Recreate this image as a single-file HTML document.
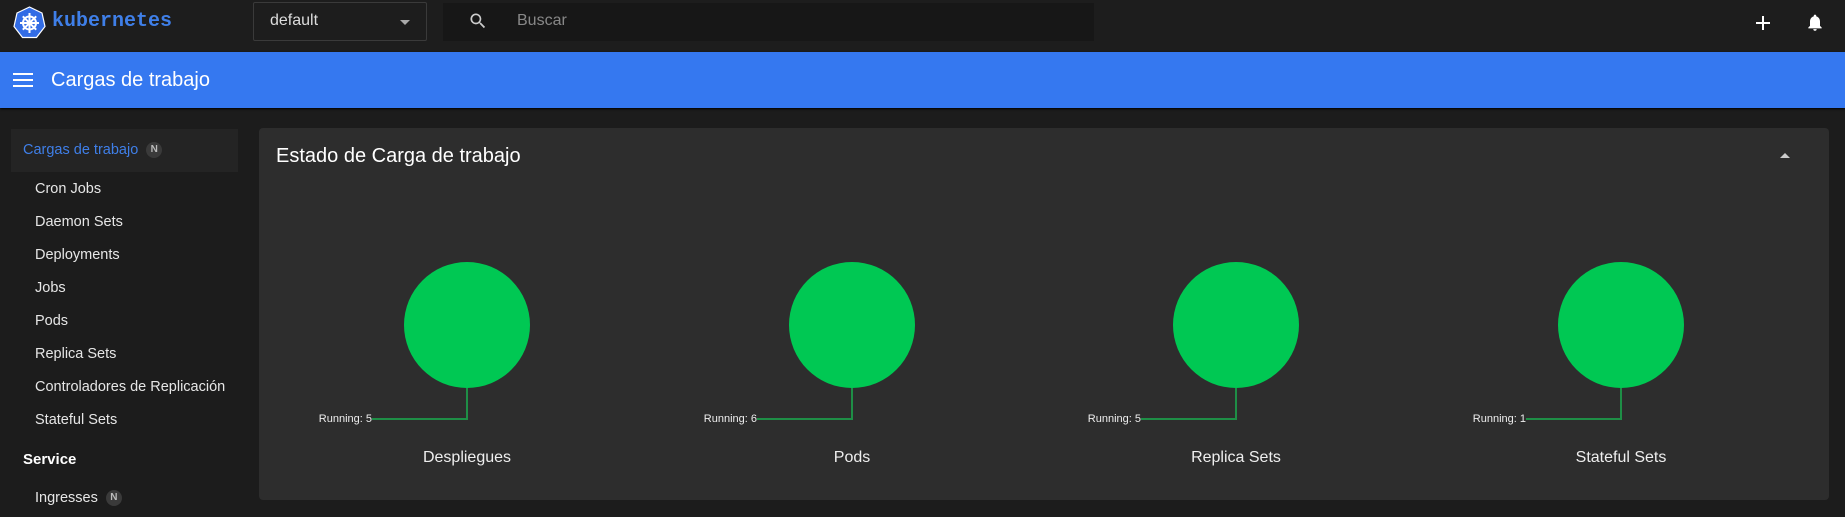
<!DOCTYPE html>
<html><head><meta charset="utf-8"><style>
*{margin:0;padding:0;box-sizing:border-box}
body{width:1845px;height:517px;overflow:hidden;background:#1c1c1c;font-family:"Liberation Sans",sans-serif;position:relative;color:#fff}
.a{position:absolute}
.top{left:0;top:0;width:1845px;height:52px;background:#1d1d1d}
.blue{left:0;top:52px;width:1845px;height:56px;background:#3578f0;box-shadow:0 1px 2px #000}
.side{font-size:14.5px;color:#e6e6e6;left:35px}
.card{left:259px;top:128px;width:1570px;height:372px;background:#2d2d2d;border-radius:4px}
.circ{width:126px;height:126px;border-radius:50%;background:#00c853;top:262px}
.run{font-size:11px;color:#eee;top:413px;width:100px;text-align:right}
.lbl{font-size:16px;color:#eee;top:449px;width:200px;text-align:center}
.badge{display:inline-block;width:16px;height:16px;border-radius:50%;background:#3a3a3a;color:#bbb;font-size:10px;text-align:center;line-height:16px;vertical-align:middle;margin-left:8px;font-weight:bold}
</style></head><body>
<div class="a top"></div>
<svg class="a" style="left:13px;top:6px" width="33" height="33" viewBox="0 0 33 33">
<polygon points="16.5,1 29,7 32,20.5 23.5,31.5 9.5,31.5 1,20.5 4,7" fill="#326ce5" stroke="#fff" stroke-width="1.2"/>
<g stroke="#fff" stroke-width="2" fill="none"><circle cx="16.5" cy="17" r="6.5"/><path d="M16.5 7v20M7 17h19M9.8 10.3l13.4 13.4M23.2 10.3L9.8 23.7"/></g><circle cx="16.5" cy="17" r="2" fill="#fff"/></svg>
<div class="a" style="left:52px;top:10px;font-family:'Liberation Mono',monospace;font-weight:bold;font-size:20px;color:#3f7fe8">kubernetes</div>
<div class="a" style="left:253px;top:2px;width:174px;height:39px;border:1px solid #3a3a3a;border-radius:2px"></div>
<div class="a" style="left:270px;top:12px;font-size:16px;color:#ddd">default</div>
<div class="a" style="left:400px;top:20px;border-left:5px solid transparent;border-right:5px solid transparent;border-top:5px solid #aaa"></div>
<div class="a" style="left:443px;top:3px;width:651px;height:38px;background:#171717"></div>
<svg class="a" style="left:468px;top:11px" width="20" height="20" viewBox="0 0 24 24"><path fill="#ccc" d="M15.5 14h-.8l-.3-.3A6.5 6.5 0 1 0 9.5 16a6.5 6.5 0 0 0 4.2-1.6l.3.3v.8l5 5 1.5-1.5-5-5zm-6 0A4.5 4.5 0 1 1 9.5 5a4.5 4.5 0 0 1 0 9z"/></svg>
<div class="a" style="left:517px;top:12px;font-size:16px;color:#888">Buscar</div>
<svg class="a" style="left:1754px;top:14px" width="18" height="18" viewBox="0 0 18 18"><path d="M9 2v14M2 9h14" stroke="#fff" stroke-width="2"/></svg>
<svg class="a" style="left:1805px;top:11px" width="20" height="23" viewBox="0 0 24 24"><path fill="#fff" d="M12 22a2 2 0 0 0 2-2h-4a2 2 0 0 0 2 2zm6-6v-5c0-3.1-1.6-5.6-4.5-6.3V4a1.5 1.5 0 0 0-3 0v.7C7.6 5.4 6 7.9 6 11v5l-2 2v1h16v-1l-2-2z"/></svg>
<div class="a blue"></div>
<svg class="a" style="left:13px;top:72px" width="20" height="16" viewBox="0 0 20 16"><path d="M0 2h20M0 8h20M0 14h20" stroke="#fff" stroke-width="2"/></svg>
<div class="a" style="left:51px;top:69px;font-size:20px;color:#fff">Cargas de trabajo</div>
<div class="a" style="left:11px;top:129px;width:227px;height:43px;background:#242424"></div>
<div class="a" style="left:23px;top:142px;font-size:14.5px;color:#3f7fe8">Cargas de trabajo<span class="badge">N</span></div>
<div class="a side" style="top:181px">Cron Jobs</div>
<div class="a side" style="top:214px">Daemon Sets</div>
<div class="a side" style="top:247px">Deployments</div>
<div class="a side" style="top:280px">Jobs</div>
<div class="a side" style="top:313px">Pods</div>
<div class="a side" style="top:346px">Replica Sets</div>
<div class="a side" style="top:379px">Controladores de Replicación</div>
<div class="a side" style="top:412px">Stateful Sets</div>
<div class="a" style="left:23px;top:451px;font-size:15px;color:#fff;font-weight:bold">Service</div>
<div class="a side" style="top:490px">Ingresses<span class="badge">N</span></div>
<div class="a card"></div>
<div class="a" style="left:276px;top:145px;font-size:20px;color:#fff">Estado de Carga de trabajo</div>
<div class="a" style="left:1780px;top:153px;border-left:5px solid transparent;border-right:5px solid transparent;border-bottom:5px solid #ccc"></div>

<div class="a circ" style="left:404px"></div>
<div class="a" style="left:372px;top:388px;width:96px;height:32px;border-right:2px solid #1e8e46;border-bottom:2px solid #1e8e46"></div>
<div class="a run" style="left:272px">Running: 5</div>
<div class="a lbl" style="left:367px">Despliegues</div>

<div class="a circ" style="left:789px"></div>
<div class="a" style="left:757px;top:388px;width:96px;height:32px;border-right:2px solid #1e8e46;border-bottom:2px solid #1e8e46"></div>
<div class="a run" style="left:657px">Running: 6</div>
<div class="a lbl" style="left:752px">Pods</div>

<div class="a circ" style="left:1173px"></div>
<div class="a" style="left:1141px;top:388px;width:96px;height:32px;border-right:2px solid #1e8e46;border-bottom:2px solid #1e8e46"></div>
<div class="a run" style="left:1041px">Running: 5</div>
<div class="a lbl" style="left:1136px">Replica Sets</div>

<div class="a circ" style="left:1558px"></div>
<div class="a" style="left:1526px;top:388px;width:96px;height:32px;border-right:2px solid #1e8e46;border-bottom:2px solid #1e8e46"></div>
<div class="a run" style="left:1426px">Running: 1</div>
<div class="a lbl" style="left:1521px">Stateful Sets</div>
</body></html>
